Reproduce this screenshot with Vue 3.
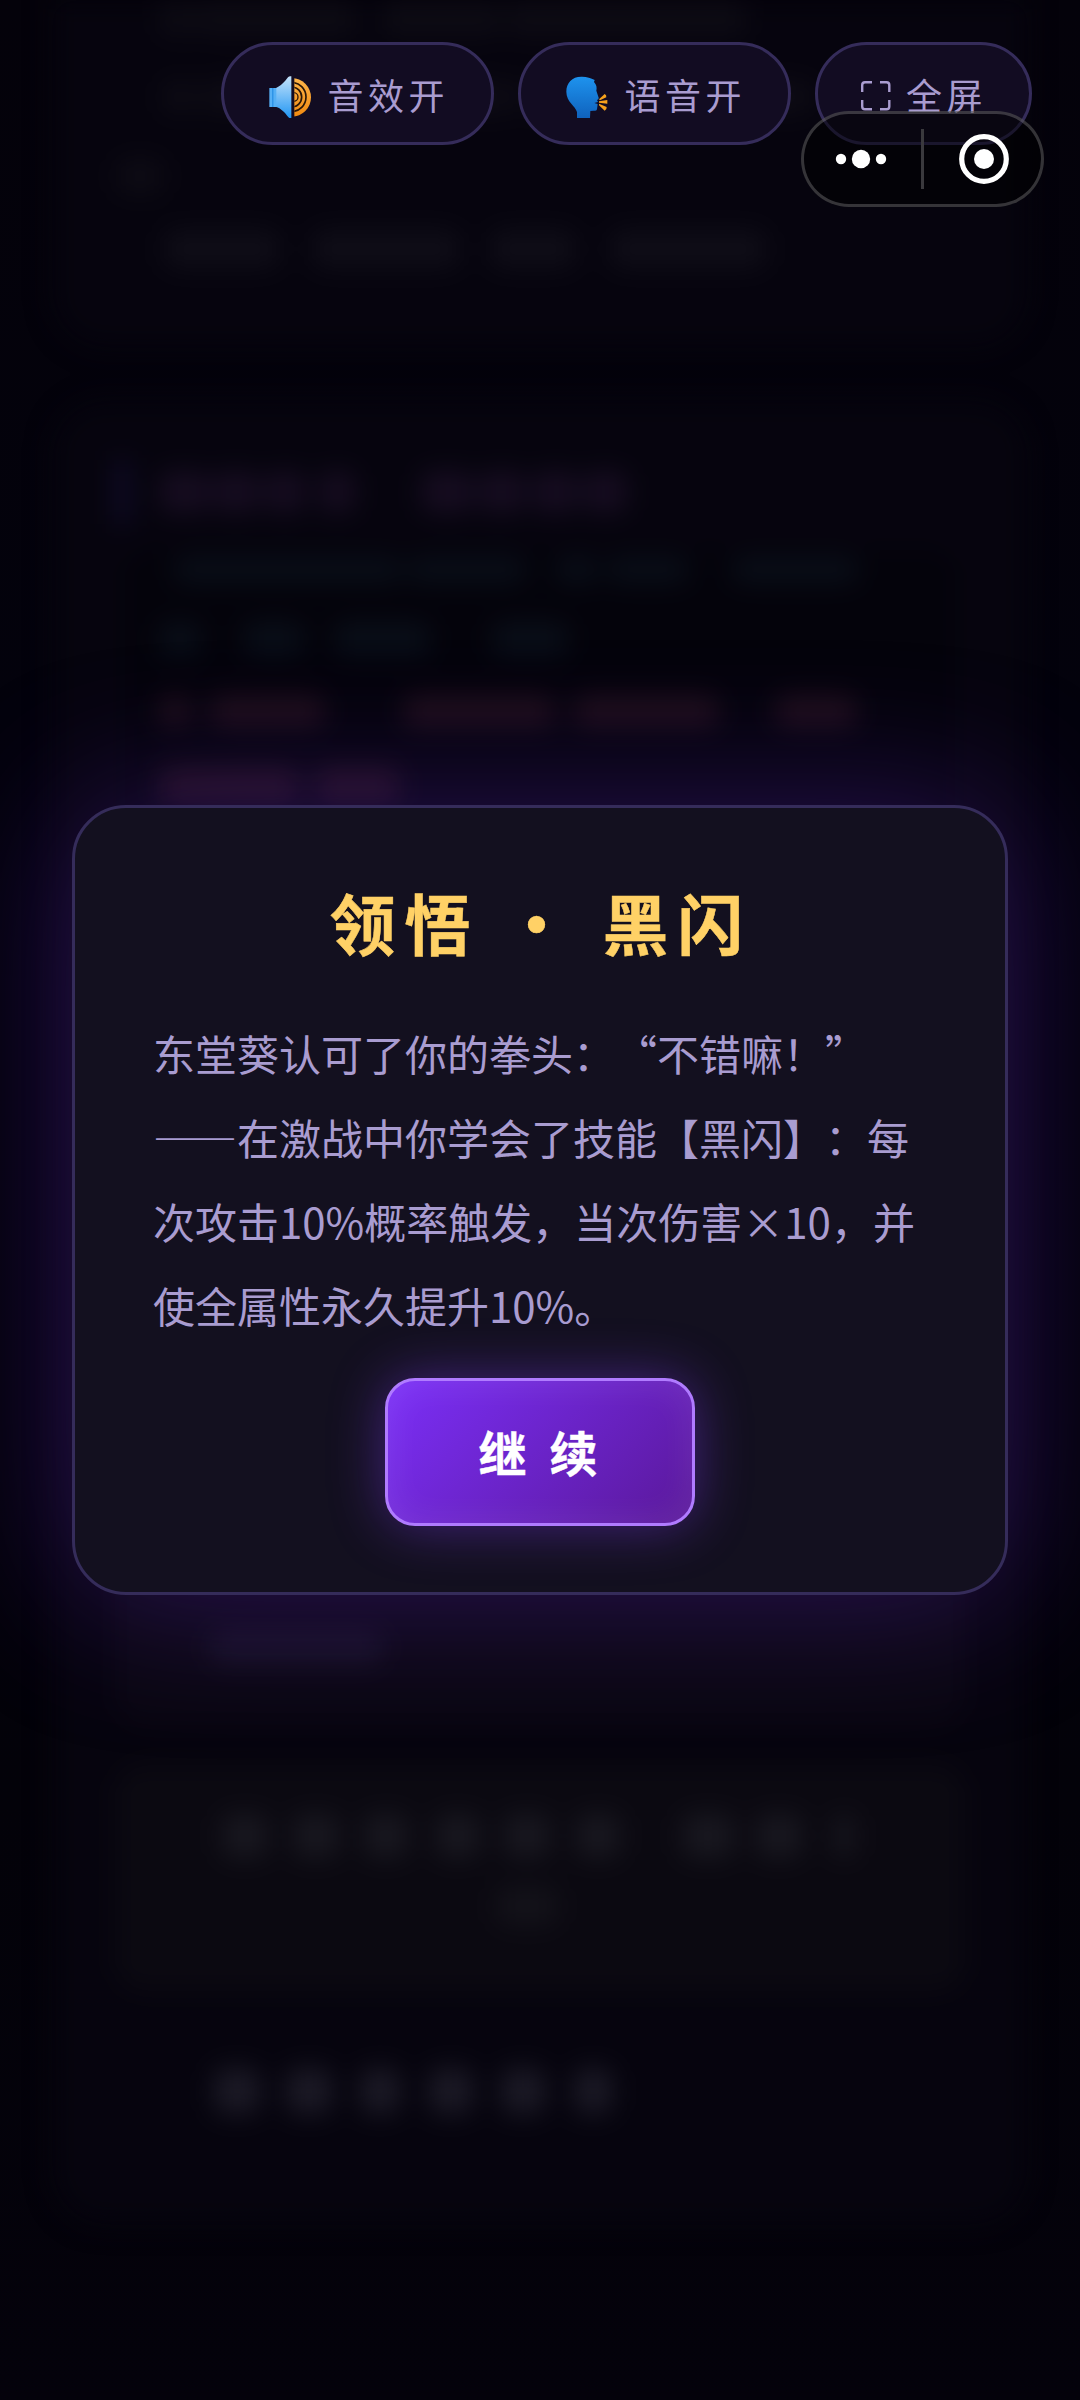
<script setup>
const intro = [
  { gap: 0, h: 36, tone: 'faint', segs: [[160, 34], [2, 160], [26, 120], [4, 240]] },
  { gap: 44, h: 34, tone: 'faint', segs: [[162, 34], [4, 166], [30, 120], [8, 290]] },
  { gap: 44, h: 36, tone: 'faint', segs: [[116, 48]] },
  { gap: 36, h: 38, tone: '', segs: [[164, 116], [32, 148], [30, 86], [34, 156]] },
]
const heading = [[0, 50], [4, 46], [6, 40], [14, 36], [66, 52], [6, 46], [8, 44], [6, 44]]
const log = [
  { tone: 'teal', h: 26, segs: [[14, 230], [4, 120], [28, 44], [8, 82], [42, 128]] },
  { tone: 'teal', h: 34, segs: [[0, 42], [42, 62], [28, 98], [60, 78]] },
  { tone: 'red', h: 32, segs: [[0, 32], [18, 116], [78, 152], [18, 146], [56, 82]] },
  { tone: 'red', h: 38, segs: [[0, 140], [16, 84]] },
]
const wide = [[4, 46], [25, 46], [25, 44], [28, 44], [24, 46], [26, 44], [62, 52], [22, 46], [32, 20]]
const last = [[0, 46], [26, 46], [28, 40], [29, 44], [28, 44], [29, 38]]
</script>

<template>
  <main class="screen" lang="zh-CN">
    <div class="page" aria-hidden="true">
      <section class="panel first">
        <div v-for="(r, i) in intro" :key="i" class="row" :class="r.tone" :style="{ marginTop: r.gap + 'px', height: r.h + 'px' }">
          <i v-for="(s, j) in r.segs" :key="j" :style="{ marginLeft: s[0] + 'px', width: s[1] + 'px' }"></i>
        </div>
      </section>
      <section class="panel second">
        <div class="row heading">
          <b></b>
          <i v-for="(s, j) in heading" :key="j" :style="{ marginLeft: s[0] + 'px', width: s[1] + 'px' }"></i>
        </div>
        <div class="log">
          <div v-for="(r, i) in log" :key="i" class="line">
            <div class="row" :class="r.tone" :style="{ height: r.h + 'px' }">
              <i v-for="(s, j) in r.segs" :key="j" :style="{ marginLeft: s[0] + 'px', width: s[1] + 'px' }"></i>
            </div>
          </div>
        </div>
        <div class="box upper"><div class="row"><i class="short"></i></div></div>
        <div class="box wide">
          <div class="row"><i v-for="(s, j) in wide" :key="j" :style="{ marginLeft: s[0] + 'px', width: s[1] + 'px' }"></i></div>
          <div class="row centre"><i class="mid"></i></div>
        </div>
        <div class="row last">
          <i v-for="(s, j) in last" :key="j" :style="{ marginLeft: s[0] + 'px', width: s[1] + 'px' }"></i>
        </div>
      </section>
    </div>

    <div class="overlay">
      <header class="toolbar">
        <button class="chip">
          <svg class="emoji" viewBox="206 168 126 126">
            <defs>
              <linearGradient id="cone" x1="0" y1="0" x2="0" y2="1">
                <stop offset="0" stop-color="#c4e3fb" /><stop offset="1" stop-color="#2196f3" />
              </linearGradient>
              <linearGradient id="wave" x1="0" y1="0" x2="0" y2="1">
                <stop offset="0" stop-color="#fdb54a" /><stop offset="1" stop-color="#f08a10" />
              </linearGradient>
              <clipPath id="half"><rect x="282" y="168" width="52" height="128" /></clipPath>
            </defs>
            <path d="M207 204h23v57h-23z" fill="#55b0f6" />
            <path d="M216 204h3v57h-3z" fill="#1c86e0" />
            <path d="M228 203C240 200 254 184 263 172Q267 167 273 169V294Q267 296 263 290C254 278 240 264 228 261Z" fill="url(#cone)" />
            <g clip-path="url(#half)">
              <circle cx="274" cy="232" r="58" fill="url(#wave)" />
              <g fill="none" stroke="#2a1708" stroke-width="5">
                <circle cx="273" cy="231" r="44" /><circle cx="274" cy="231" r="30" />
              </g>
              <circle cx="280" cy="231" r="13" fill="none" stroke="#2a1708" stroke-width="4" />
            </g>
          </svg>
          <span>音效开</span>
        </button>
        <button class="chip">
          <svg class="emoji" viewBox="1097 168 126 126">
            <defs>
              <linearGradient id="head" x1="0" y1="0" x2="0" y2="1">
                <stop offset="0" stop-color="#1e93ee" /><stop offset="1" stop-color="#0f62bd" />
              </linearGradient>
            </defs>
            <path d="M1130 294V276C1126 258 1098 246 1098 215C1098 188 1116 169 1145 170C1160 170 1172 174 1183 180L1181 186C1189 195 1190 203 1188 212L1195 233Q1196 238 1190 240L1193 246L1182 249L1192 252L1190 268Q1188 274 1180 272L1170 273L1169 294Z" fill="url(#head)" />
            <path d="M1196 238L1213 222Q1219 225 1218 232L1199 241ZM1196 244L1221 240V251L1196 248ZM1196 251L1219 261Q1220 269 1213 272L1196 256Z" fill="#f5a11c" />
          </svg>
          <span>语音开</span>
        </button>
        <button class="chip">
          <svg class="full" viewBox="0 0 31 31" fill="none" stroke="#a99cd0" stroke-width="2.4">
            <path d="M2.2 12V5Q2.2 2.2 5 2.2H12M20 2.2H26.5Q29.3 2.2 29.3 5V12M29.3 20V26.5Q29.3 29.3 26.5 29.3H20M12 29.3H5Q2.2 29.3 2.2 26.5V20" />
          </svg>
          <span>全屏</span>
        </button>
      </header>

      <section class="modal">
        <h2>领悟 · 黑闪</h2>
        <p>东堂葵认可了你的拳头：“不错嘛！”<br>——在激战中你学会了技能【黑闪】：每<br>次攻击10%概率触发，当次伤害×10，并<br>使全属性永久提升10%。</p>
        <button class="go">继 续</button>
      </section>
    </div>

    <div class="capsule">
      <svg viewBox="0 0 237 90" width="237" height="90">
        <g fill="#fff">
          <circle cx="37" cy="45" r="5.2" /><circle cx="57" cy="45" r="9.2" /><circle cx="77" cy="45" r="5.2" /><circle cx="180" cy="45" r="10" />
        </g>
        <circle cx="180" cy="45" r="22.3" fill="none" stroke="#fff" stroke-width="5.2" />
        <rect x="117" y="15" width="3" height="60" fill="#3a393d" />
      </svg>
    </div>
  </main>
</template>

<style>
body { margin: 0; background: #020108; }
</style>

<style scoped>
* { box-sizing: border-box; }
.screen {
  position: relative;
  width: 1080px;
  height: 2400px;
  overflow: hidden;
  background: linear-gradient(#04020a, #03020c 30%, #030209 75%, #04020b);
  font-family: "Noto Sans CJK SC", sans-serif;
}
.page { display: flex; flex-direction: column; height: 2400px; filter: blur(13px); }
.panel { margin: 0 52px; background: #06040e; }
.panel.first { height: 348px; border-radius: 0 0 54px 54px; }
.panel.first .row { margin-left: -52px; }
.panel.second { height: 1825px; margin-top: 52px; border-radius: 54px; padding: 62px 63px 0; }
.row { display: flex; align-items: stretch; }
.row i { display: block; flex: none; background: #0f0d17; border-radius: 12px; }
.faint i { background: #0d0b14; }
.heading { height: 60px; align-items: center; }
.heading b { width: 14px; height: 64px; background: #110b2c; }
.heading i { height: 42px; background: #160c20; }
.heading b + i { margin-left: 30px !important; }
.log { margin: 28px 10px 0; height: 560px; border-radius: 30px; padding: 0 34px; background: #04030b; }
.line { height: 73px; display: flex; align-items: center; }
.line:first-child { height: 40px; }
.line:nth-child(2) { height: 97px; }
.line:nth-child(3) { height: 47px; }
.line:nth-child(4) { height: 104px; }
.teal i { background: #090e18; }
.red i { background: #1c0d18; }
.box { background: #0b0911; border-radius: 28px; }
.upper { margin-top: 320px; height: 295px; padding: 200px 95px 0; }
.upper .row { height: 34px; }
.row .short { width: 172px; background: #141020; }
.box.upper { background: #0a0711; }
.wide { margin-top: 40px; height: 226px; padding: 49px 103px 0; }
.wide .row { height: 44px; }
.wide .row i { background: #18171f; }
.wide .centre { margin-top: 29px; justify-content: center; height: 38px; }
.wide .centre .mid { width: 62px; margin-right: 26px; background: #131219; }
.last { margin: 77px 0 0 99px; height: 46px; }
.last i { background: #1b1925; }

.overlay { position: absolute; inset: 0; display: flex; flex-direction: column; align-items: center; }
.toolbar { display: flex; justify-content: flex-end; gap: 24px; width: 100%; padding: 42px 48px 0; }
button { font-family: inherit; margin: 0; }
.chip {
  display: flex;
  align-items: center;
  height: 103px;
  padding: 1px 42px 0;
  border: 3px solid #352c5a;
  border-radius: 52px;
  background: #120c22;
  color: #a99cd0;
  font-size: 36px;
  line-height: 52px;
  letter-spacing: 4.5px;
  white-space: nowrap;
}
.emoji { width: 42px; height: 42px; margin: 6px 16.8px 0 2.7px; flex: none; }
.full { width: 31px; height: 31px; margin: 3px 15px 0 0; flex: none; }
.modal {
  display: flex;
  flex-direction: column;
  align-items: center;
  width: 936px;
  height: 790px;
  margin-top: 660px;
  padding: 65px 78px 0;
  border: 3px solid #352c5a;
  border-radius: 54px;
  background: #13101f;
  box-shadow: 0 0 150px rgba(110, 45, 225, 0.34);
}
h2 {
  margin: 0 0 0 2px;
  font-size: 66px;
  line-height: 96px;
  font-weight: 700;
  letter-spacing: 9px;
  color: #ffd166;
  -webkit-text-stroke: 0.5px #ffd166;
  white-space: nowrap;
}
p { margin: 42px 0 0; width: 774px; font-size: 42px; line-height: 84px; color: #a99cd0; white-space: nowrap; text-spacing-trim: space-all; }
.go {
  width: 310px;
  height: 148px;
  margin-top: 31px;
  padding: 0 0 2px 2px;
  border: 3px solid #b07bff;
  border-radius: 30px;
  background: linear-gradient(135deg, #7b2ff7, #5a189a);
  box-shadow: 0 0 54px rgba(124, 58, 237, 0.45), inset 0 0 36px rgba(255, 255, 255, 0.09);
  color: #fff;
  font-size: 48px;
  font-weight: 700;
  letter-spacing: 6px;
  -webkit-text-stroke: 0.4px #fff;
}
.capsule {
  position: absolute;
  left: 801px;
  top: 111px;
  width: 243px;
  height: 96px;
  border: 3px solid rgba(255, 255, 255, 0.2);
  border-radius: 48px;
  background: rgba(0, 0, 0, 0.5);
}
.capsule svg { display: block; }
</style>
